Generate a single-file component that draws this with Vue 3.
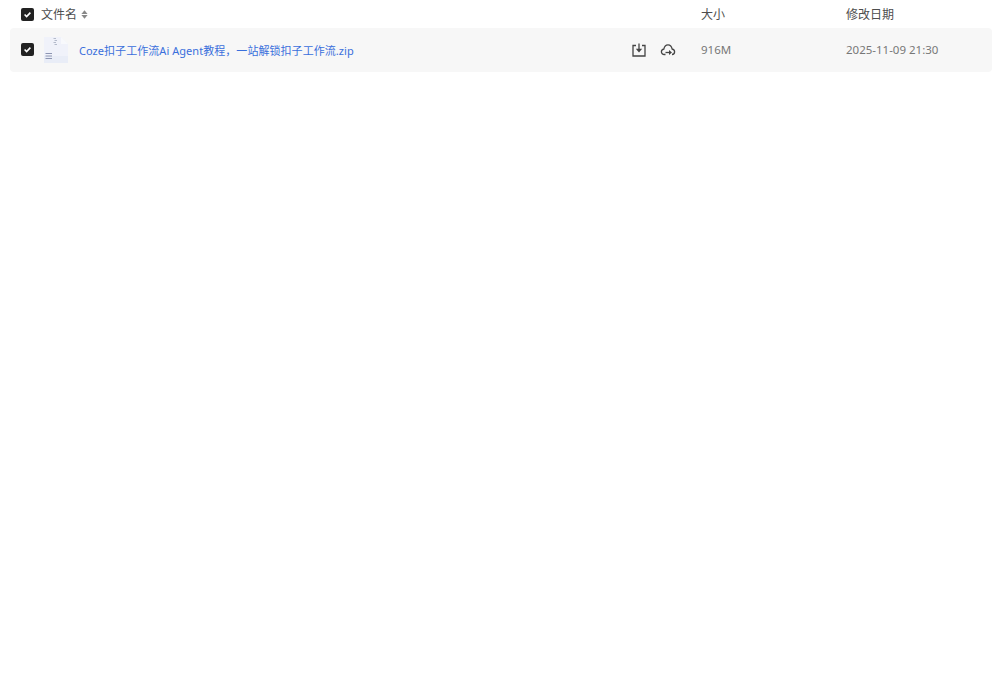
<template>
  <div class="file-table">
    <div class="row head">
      <div class="col-name">
        <span class="check">
          <svg viewBox="0 0 13 13" width="13" height="13"><path d="M3.6 6.5 5.6 8.5 9.4 4.6" fill="none" stroke="#fff" stroke-width="1.6" /></svg>
        </span>
        <span class="head-title">文件名</span>
        <svg class="sort" viewBox="0 0 7 9" width="7" height="9">
          <path d="M3.5 0.3 6.6 3.9H0.4Z" fill="#888" />
          <path d="M3.5 8.7 0.4 5.1H6.6Z" fill="#888" />
        </svg>
      </div>
      <div class="col-size">大小</div>
      <div class="col-date">修改日期</div>
    </div>

    <div v-for="file in files" :key="file.name" class="row item">
      <div class="col-name">
        <span class="check">
          <svg viewBox="0 0 13 13" width="13" height="13"><path d="M3.6 6.5 5.6 8.5 9.4 4.6" fill="none" stroke="#fff" stroke-width="1.6" /></svg>
        </span>
        <svg class="zip-icon" viewBox="0 0 28 28" width="28" height="28">
          <path d="M2 1H19L26 8V27H2Z" fill="#f0f2fa" />
          <path d="M19 1 26 8H19Z" fill="#f8f9fc" />
          <path d="M2 20H26V27H2Z" fill="#e9edf7" />
          <path d="M11.5 2.5H14M12.5 4.5H15M11.5 6.5H14M12.5 8.5H15" stroke="#b4bbcb" stroke-width="1" />
          <path d="M3.5 17.5H10M3.5 20H10M3.5 22.5H10" stroke="#8d95b2" stroke-width="1.2" />
        </svg>
        <span class="file-link">{{ file.name }}</span>
      </div>
      <div class="actions">
        <svg viewBox="0 0 16 16" width="16" height="16" fill="none" stroke="#444" stroke-width="1.3">
          <path d="M5 3.5H2V14H14V3.5H11" />
          <path d="M8 1.5V8" />
          <path d="M4.8 6.8H11.2L8 10.6Z" fill="#444" stroke="none" />
        </svg>
        <svg viewBox="0 0 16 16" width="16" height="16" fill="none" stroke="#444" stroke-width="1.3">
          <path d="M5.5 12.5H4.3C2.6 12.5 1.4 11.3 1.4 9.8 1.4 8.4 2.4 7.3 3.9 7 4.3 4.6 6 2.8 8 2.8 10 2.8 11.7 4.6 12.1 7 13.6 7.3 14.6 8.4 14.6 9.8 14.6 11.3 13.5 12.5 12 12.5" />
          <path d="M5.5 10.5H10" />
          <path d="M9 8 12 10.5 9 13Z" fill="#444" stroke="none" />
        </svg>
      </div>
      <div class="col-size muted">{{ file.size }}</div>
      <div class="col-date muted">{{ file.date }}</div>
    </div>
  </div>
</template>

<script setup>
const files = [
  {
    name: 'Coze扣子工作流Ai Agent教程，一站解锁扣子工作流.zip',
    size: '916M',
    date: '2025-11-09 21:30'
  }
]
</script>

<style>
html,
body {
  background: #fff;
}
</style>

<style scoped>
.file-table {
  width: 982px;
  margin-left: 10px;
  font-family: "Noto Sans", "Noto Sans CJK SC", sans-serif;
  font-size: 12px;
  color: #4d4d4d;
}

.row {
  display: flex;
  align-items: center;
  padding-left: 11px;
}

.head {
  height: 28px;
}

.item {
  height: 44px;
  background: #f7f7f7;
  border-radius: 4px;
}

.col-name {
  flex: 1;
  display: flex;
  align-items: center;
  min-width: 0;
}

.item .check {
  margin-bottom: 1px;
}

.check {
  width: 13px;
  height: 13px;
  background: #222;
  border-radius: 2px;
  display: flex;
  flex-shrink: 0;
}

.head-title {
  margin-left: 7px;
}

.sort {
  margin-left: 4px;
}

.zip-icon {
  margin-left: 8px;
}

.file-link {
  margin-left: 9px;
  margin-bottom: 1px;
  color: #3a6fdc;
  font-size: 11px;
  letter-spacing: 0.05px;
}

.actions {
  display: flex;
  gap: 13px;
  margin-right: 25px;
}

.col-size {
  width: 145px;
}

.col-date {
  width: 146px;
}

.muted {
  color: #777;
  font-size: 11.5px;
  margin-bottom: 1px;
}
</style>
